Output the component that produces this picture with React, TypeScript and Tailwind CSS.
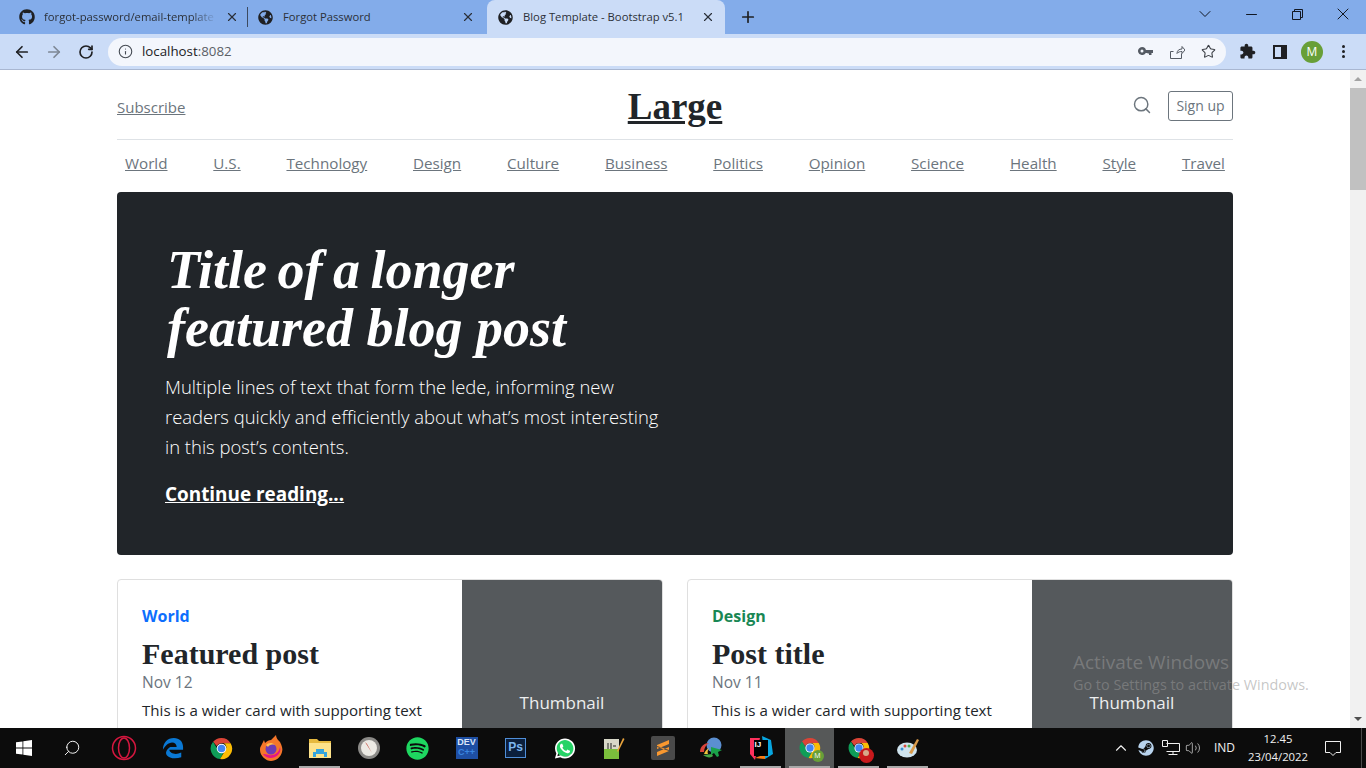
import { ArrowLeft, ArrowRight, RotateCw, Info, Star, Plus, X, ChevronDown, ChevronUp, Minus, Search, Volume2 } from "lucide-react";
import { FaGithub, FaGlobeAmericas, FaSpotify, FaWhatsapp, FaSteam } from "react-icons/fa";

const navLinks = ["World", "U.S.", "Technology", "Design", "Culture", "Business", "Politics", "Opinion", "Science", "Health", "Style", "Travel"];

function ChromeLogo({ size = 26 }: { size?: number }) {
  return (
    <svg width={size} height={size} viewBox="0 0 48 48">
      <path d="M24 2a22 22 0 0 1 19 11H24a11 11 0 0 0-10 6L6.500 10A22 22 0 0 1 24 2z" fill="#db4437" />
      <path d="M6.500 10 16 26a10 10 0 0 0 12 7l-7 13A22 22 0 0 1 6.500 10z" fill="#0f9d58" />
      <path d="M43 13a22 22 0 0 1-22 33l10-17a10 10 0 0 0-2-16z" fill="#fbbc05" />
      <circle cx="24" cy="24" r="10" fill="#fff" />
      <circle cx="24" cy="24" r="8" fill="#4285f4" />
    </svg>
  );
}

function BrowserTab({ title, icon, active, fade, className }: { title: string; icon: React.ReactNode; active?: boolean; fade?: boolean; className: string }) {
  return (
    <div className={`flex items-center h-full shrink-0 ${className} ${active ? "bg-[#cbdcf7] rounded-t-[8px]" : ""}`}>
      <span className="w-[25px] shrink-0 text-[#1f2023]">{icon}</span>
      <span className={`flex-1 overflow-hidden whitespace-nowrap text-[11.250px] text-[#2b3038] ${fade ? "[mask-image:linear-gradient(to_right,black_85%,transparent)]" : ""}`}>{title}</span>
      <X size={14} strokeWidth={2} className="ml-2 text-[#2a2f38] shrink-0" />
    </div>
  );
}

function TabStrip() {
  return (
    <div className="h-[34px] bg-[#83acea] flex items-center shrink-0">
      <div className="flex items-center h-full">
        <BrowserTab fade className="w-[247px] pl-[19px] pr-[8px]" title="forgot-password/email-template" icon={<FaGithub size={16} />} />
        <div className="w-px h-[20px] bg-[#3c4a60]" />
        <BrowserTab className="w-[239px] pl-[10px] pr-[12px]" title="Forgot Password" icon={<FaGlobeAmericas size={15} />} />
        <BrowserTab active className="w-[238px] pl-[11px] pr-[10px]" title="Blog Template - Bootstrap v5.1" icon={<FaGlobeAmericas size={15} />} />
      </div>
      <Plus size={18} strokeWidth={2.25} className="ml-[14px] text-[#1f2023]" />
      <div className="ml-auto flex items-center h-full pb-[6px] text-[#111722]">
        <ChevronDown size={20} strokeWidth={1.2} className="mr-[28px]" />
        <Minus size={17} strokeWidth={1.5} className="mr-[32px]" />
        <svg width="11" height="11" viewBox="0 0 11 11" fill="none" stroke="currentColor" className="mr-[30px]">
          <path d="M.500 2.500h8v8h-8zM2.500 2.500V.500h8v8h-2" />
        </svg>
        <X size={20} strokeWidth={1.2} className="mr-[13px]" />
      </div>
    </div>
  );
}

function Toolbar() {
  return (
    <div className="h-[36px] bg-[#cbdcf7] border-b border-[#a9b7d1] flex items-center shrink-0 text-[#1f2023]">
      <ArrowLeft size={18} strokeWidth={2.25} className="ml-[13px]" />
      <ArrowRight size={18} strokeWidth={2.25} className="ml-[14px] text-[#7d8794]" />
      <RotateCw size={16} strokeWidth={2.5} className="ml-[15px]" />
      <div className="ml-[14px] w-[1118px] h-[28px] bg-[#f3f6fc] rounded-full flex items-center pl-[10px] pr-[10px]">
        <Info size={15} strokeWidth={1.75} className="text-[#444a52]" />
        <span className="ml-[9px] text-[13.300px] leading-none text-[#5b5f66]">
          <span className="text-[#202124]">localhost</span>:8082
        </span>
        <div className="ml-auto flex items-center text-[#545a63]">
          <svg width="15" height="9" viewBox="0 0 15 9" fill="currentColor" className="mr-[16px]">
            <path d="M4 0a4 4 0 1 1-3.800 5.200A4 4 0 0 1 4 0zm0 2.500a1.500 1.500 0 1 0 0 3 1.500 1.500 0 0 0 0-3zM7.500 3H15v3h-1.500v2H11V6.500H9.500V6h-2z" />
          </svg>
          <svg width="16" height="16" viewBox="0 0 16 16" fill="none" stroke="currentColor" strokeWidth="1" className="mr-[16px]">
            <path d="M12.500 9.500v5h-11v-7h3M8 9.500c0-3 2-4.500 5-4.500V2.500l3 3.500-3 3.500V7.500c-2 0-4 .500-5 2z" />
          </svg>
          <Star size={15} strokeWidth={1.75} className="text-[#3c4046]" />
        </div>
      </div>
      <svg width="17" height="17" viewBox="0 0 24 24" fill="#1f2023" className="ml-[13px]">
        <path d="M20.500 11H19V7c0-1.100-.9-2-2-2h-4V3.500C13 2.120 11.880 1 10.500 1S8 2.120 8 3.500V5H4c-1.100 0-1.990.9-1.990 2v3.800H3.500c1.490 0 2.700 1.210 2.700 2.700s-1.210 2.700-2.700 2.700H2V20c0 1.100.9 2 2 2h3.800v-1.500c0-1.490 1.210-2.700 2.700-2.700 1.490 0 2.700 1.210 2.700 2.700V22H17c1.100 0 2-.9 2-2v-4h1.500c1.380 0 2.500-1.120 2.500-2.500S21.880 11 20.500 11z" />
      </svg>
      <svg width="14" height="14" viewBox="0 0 14 14" className="ml-[17px]">
        <path d="M0 0h14v14H0z" fill="#1f2023" />
        <path d="M2 2h6v10H2z" fill="#cbdcf7" />
      </svg>
      <div className="ml-[14px] w-[22px] h-[22px] rounded-full bg-[#689f38] text-white text-[12px] flex items-center justify-center">M</div>
      <div className="ml-[19px] flex flex-col gap-[2px]">
        <span className="w-[3px] h-[3px] rounded-full bg-[#1f2023]" />
        <span className="w-[3px] h-[3px] rounded-full bg-[#1f2023]" />
        <span className="w-[3px] h-[3px] rounded-full bg-[#1f2023]" />
      </div>
    </div>
  );
}

function PostCard({ tag, tagColor, title, date }: { tag: string; tagColor: string; title: string; date: string }) {
  return (
    <div className="flex h-[250px] border border-[#dfdfdf] rounded-[4px] overflow-hidden">
      <div className="flex-1 pl-6 pt-6">
        <div className={`text-[16px] leading-[24px] font-bold ${tagColor}`}>{tag}</div>
        <h3 className="mt-[9px] font-['Liberation_Serif',serif] font-bold text-[#212529] text-[30px] leading-[34px]">{title}</h3>
        <div className="-mt-[1px] text-[15.500px] leading-[24px] text-[#6c757d]">{date}</div>
        <p className="mt-[4px] text-[#212529] text-[15.100px] leading-[24px]">This is a wider card with supporting text</p>
      </div>
      <div className="w-[200px] bg-[#55595c] flex items-center justify-center pb-[2px] text-[#eceeef] text-[17px]">Thumbnail</div>
    </div>
  );
}

function BlogPage() {
  return (
    <div className="flex-1 overflow-hidden px-[117px]">
      <header className="h-[70px] border-b border-[#dee2e6] flex items-center justify-between">
        <a href="#" className="w-1/3 pt-[6px] text-[#6c757d] underline text-[15px]">Subscribe</a>
        <a href="#" className="w-1/3 pt-[4px] text-center font-['Liberation_Serif',serif] font-bold text-[37px] text-[#212529] underline">Large</a>
        <div className="w-1/3 flex items-center justify-end">
          <Search size={20} strokeWidth={1.75} className="text-[#6c757d] mr-[16px]" />
          <button className="mt-[2px] w-[65px] h-[30px] border border-[#6c757d] rounded-[3px] text-[14px] text-[#6c757d]">Sign up</button>
        </div>
      </header>
      <nav className="h-[52px] flex items-center justify-between px-2 pb-[6px]">
        {navLinks.map((link) => (
          <a key={link} href="#" className="text-[#6c757d] underline text-[15.200px]">{link}</a>
        ))}
      </nav>
      <section className="h-[363px] bg-[#212529] rounded-[4px] pl-[48px] pt-[49px] text-white">
        <h1 className="ml-[2px] font-['Liberation_Serif',serif] italic font-bold text-[54px] leading-[58px]">
          <span className="block [word-spacing:-3px]">Title of a longer</span>
          <span className="block">featured blog post</span>
        </h1>
        <p className="mt-[15px] text-[18.450px] leading-[30px] font-light">
          Multiple lines of text that form the lede, informing new<br />
          readers quickly and efficiently about what’s most interesting<br />
          in this post’s contents.
        </p>
        <a href="#" className="block mt-[17px] text-[18.900px] leading-[30px] font-bold underline">Continue reading...</a>
      </section>
      <div className="mt-[24px] grid grid-cols-2 gap-[24px]">
        <PostCard tag="World" tagColor="text-[#0d6efd]" title="Featured post" date="Nov 12" />
        <PostCard tag="Design" tagColor="text-[#198754]" title="Post title" date="Nov 11" />
      </div>
    </div>
  );
}

function Scrollbar() {
  return (
    <div className="w-[16px] bg-[#f1f1f1] flex flex-col items-center shrink-0">
      <div className="h-[18px] flex items-center justify-center">
        <div className="w-0 h-0 border-x-[4px] border-x-transparent border-b-[4px] border-b-[#a3a3a3]" />
      </div>
      <div className="w-full h-[102px] bg-[#c1c1c1]" />
      <div className="mt-auto h-[18px] flex items-center justify-center">
        <div className="w-0 h-0 border-x-[4px] border-x-transparent border-t-[4px] border-t-[#505050]" />
      </div>
    </div>
  );
}

function TaskIcon({ children, line, active }: { children: React.ReactNode; line?: boolean; active?: boolean }) {
  return (
    <div className={`relative w-[49px] h-full flex items-center justify-center shrink-0 ${active ? "bg-[#565858]" : ""}`}>
      {children}
      {line && <div className="absolute bottom-0 left-[4px] right-[4px] h-[2px] bg-[#a9a9a9]" />}
    </div>
  );
}

function Taskbar() {
  return (
    <div className="h-[40px] bg-[#0c0c0c] flex items-center shrink-0 text-white">
      <div className="w-[48px] h-full flex items-center justify-center">
        <svg width="16" height="16" viewBox="0 0 16 16" fill="#fff">
          <path d="M0 2.300 6.500 1.400V7.600H0zM7.300 1.300 16 0V7.600H7.300zM0 8.400H6.500V14.600L0 13.700zM7.300 8.400H16V16L7.300 14.700z" />
        </svg>
      </div>
      <div className="w-[48px] h-full flex items-center justify-center">
        <Search size={18} strokeWidth={1.25} className="-scale-x-100" />
      </div>
      <div className="w-[3px]" />
      <TaskIcon>
        <svg width="26" height="26" viewBox="0 0 26 26" fill="none" stroke="#d6173f" strokeWidth="1.500">
          <circle cx="13" cy="13" r="11.500" />
          <ellipse cx="13" cy="13" rx="5.500" ry="10" />
        </svg>
      </TaskIcon>
      <TaskIcon>
        <svg width="22" height="24" viewBox="0 0 24 24">
          <path d="M1 14C1 6 6 1 13 1c6 0 10 4 10 10v3H8c.500 4 7 6 13 3v5c-6 2-13 1.500-16-2.500C3 16 7 12 9 11h7c0-3-2-5-5-5-4 0-8 4-10 8z" fill="#0a78d4" />
        </svg>
      </TaskIcon>
      <TaskIcon><ChromeLogo size={23} /></TaskIcon>
      <TaskIcon>
        <svg width="24" height="26" viewBox="0 0 24 26">
          <path d="M2 11 5 5l1 3c2-2 4-3 6-3l5-5c0 3 2 5 4 7 2 4 3 7 2 10-1 5-6 9-11 9S1 21 1 15c0-1 0-3 1-4z" fill="#f5762a" />
          <path d="M4 19c2 4 10 6 15 1 2-2 3-5 2-8-1 6-6 9-11 8-3-1-5-1-6-1z" fill="#e31587" />
          <circle cx="12" cy="14" r="5.500" fill="#6e3bb5" />
          <path d="M7 10c2-2 6-3 9 0-3-1-6 0-7 2z" fill="#ffbd4f" />
        </svg>
      </TaskIcon>
      <TaskIcon line>
        <svg width="22" height="20" viewBox="0 0 22 20">
          <path d="M0 1h8l2 2h12v4H0z" fill="#e6b93f" />
          <path d="M0 5h22v15H0z" fill="#fde28a" />
          <path d="M4 19v-5h3v-3h8v3h3v5h-3v-3H7v3z" fill="#35a4dc" />
        </svg>
      </TaskIcon>
      <TaskIcon>
        <svg width="22" height="22" viewBox="0 0 22 22">
          <circle cx="11" cy="11" r="11" fill="#8b8a87" />
          <circle cx="11" cy="11" r="8" fill="#eceae4" />
          <path d="M7 5l7 11-5-9z" fill="#c0392b" />
        </svg>
      </TaskIcon>
      <TaskIcon><FaSpotify size={23} className="text-[#1ed760]" /></TaskIcon>
      <TaskIcon>
        <div className="w-[22px] h-[22px] bg-[#1e4fa3] text-[#dbe6f7] font-['Liberation_Sans',sans-serif] font-bold text-[9px] leading-[10px] text-center">DEV<br /><span className="text-[#3b87e0]">C++</span></div>
      </TaskIcon>
      <TaskIcon>
        <div className="w-[21px] h-[20px] bg-[#0b1f3c] border border-[#4f8ed8] text-[#7bb6f0] font-['Liberation_Sans',sans-serif] text-[12px] font-bold leading-[17px] text-center">Ps</div>
      </TaskIcon>
      <TaskIcon>
        <div className="relative w-[22px] h-[22px] flex items-center justify-center">
          <div className="absolute inset-[2px] rounded-full bg-[#25d366]" />
          <FaWhatsapp size={23} className="relative text-white" />
        </div>
      </TaskIcon>
      <TaskIcon>
        <svg width="22" height="24" viewBox="0 0 22 24">
          <path d="M1 3h15v20H1z" fill="#d8d8c8" />
          <path d="M1 13h15v10H1z" fill="#7bbf3c" />
          <path d="M5 7v6M8 7v6M10 10h3" stroke="#222" fill="none" />
          <path d="M14 15 20 2l1.500 1L15 16z" fill="#e8a33c" />
        </svg>
      </TaskIcon>
      <TaskIcon>
        <div className="w-[24px] h-[24px] rounded-[2px] bg-[#4a4a4a] flex items-center justify-center">
          <svg width="12" height="16" viewBox="0 0 12 16" fill="#f9982f">
            <path d="M0 5 12 0v4L0 9zM0 7l12 4v-1L0 6zM12 7v4L0 16v-4z" />
          </svg>
        </div>
      </TaskIcon>
      <TaskIcon>
        <svg width="26" height="22" viewBox="0 0 26 22">
          <circle cx="15" cy="8" r="7.500" fill="#5b8fd1" />
          <path d="M1 15c0-6 5-9 9-9-3 2-5 5-5 9z" fill="#d8443a" />
          <path d="M5 17c1-3 3-5 5-6-1 2-2 4-1 6z" fill="#f0c33c" />
          <path d="M4 18c4 3 8 3 10 1l-1-2z" fill="#46a546" />
          <path d="M12 10l11 3-4 2 1 4-2 1-3-4-3 2z" fill="#1aa34a" />
        </svg>
      </TaskIcon>
      <TaskIcon line>
        <div className="relative w-[24px] h-[24px] flex items-center justify-center">
          <svg width="24" height="24" viewBox="0 0 24 24" className="absolute inset-0">
            <path d="M1 2h10L6 24 1 18z" fill="#fe315d" />
            <path d="M13 0l9 4 2 14-8 5z" fill="#07a6e0" />
            <path d="M6 22l10-4v5z" fill="#f97a12" />
          </svg>
          <div className="relative w-[14px] h-[16px] bg-black text-white text-[8px] leading-[9px] font-bold pl-[1px] font-['Liberation_Sans',sans-serif]">IJ</div>
        </div>
      </TaskIcon>
      <TaskIcon active line>
        <div className="relative">
          <ChromeLogo size={22} />
          <div className="absolute -right-[3px] -bottom-[3px] w-[12px] h-[12px] rounded-full bg-[#689f38] text-white text-[7px] leading-[12px] text-center">M</div>
        </div>
      </TaskIcon>
      <TaskIcon line>
        <div className="relative">
          <ChromeLogo size={22} />
          <div className="absolute -right-[4px] -bottom-[4px] w-[15px] h-[15px] rounded-full bg-[#c8191c]">
            <div className="mx-auto mt-[2px] w-[6px] h-[6px] rounded-full bg-[#d7a98a]" />
          </div>
        </div>
      </TaskIcon>
      <TaskIcon line>
        <svg width="24" height="24" viewBox="0 0 24 24">
          <ellipse cx="11" cy="14" rx="10" ry="7.500" fill="#cfe3ee" />
          <circle cx="6" cy="13" r="1.500" fill="#3a8fd0" />
          <circle cx="9" cy="10" r="1.500" fill="#d94b3d" />
          <circle cx="13" cy="10" r="1.500" fill="#4caf50" />
          <path d="M13 17 21 3l2 1-7 14z" fill="#d99a4a" />
        </svg>
      </TaskIcon>
      <div className="ml-auto flex items-center h-full text-[#f0f0f0]">
        <ChevronUp size={18} strokeWidth={1.5} />
        <FaSteam size={16} className="ml-[8px] text-[#b9d4ee]" />
        <svg width="18" height="16" viewBox="0 0 18 16" fill="none" stroke="#f0f0f0" className="ml-[8px]">
          <path d="M4.500 3.500h13v8h-13M11 11.500v3M6.500 14.500h9M.500.500h5v6h-5z" />
        </svg>
        <Volume2 size={16} strokeWidth={1} className="ml-[5px]" />
        <span className="ml-[13px] text-[12px]">IND</span>
        <div className="ml-[8px] w-[70px] text-center text-[11.300px] leading-[18px]">
          <div>12.45</div>
          <div>23/04/2022</div>
        </div>
        <svg width="16" height="15" viewBox="0 0 16 15" fill="none" stroke="#f0f0f0" className="ml-[12px] mr-[20px]">
          <path d="M.500.500h15v11h-4.500l-3 3-3-3H.500z" />
        </svg>
        <div className="w-px h-full bg-[#4a4a4a] mr-[4px]" />
      </div>
    </div>
  );
}

export default function App() {
  return (
    <div className="relative h-screen flex flex-col overflow-hidden bg-white font-['Open_Sans',sans-serif]">
      <TabStrip />
      <Toolbar />
      <div className="flex-1 flex min-h-0">
        <BlogPage />
        <Scrollbar />
      </div>
      <Taskbar />
      {/* watermark */}
      <div className="absolute right-[56px] bottom-[73px] w-[237px] text-[#969696]/55 pointer-events-none">
        <div className="text-[19px] leading-[26px]">Activate Windows</div>
        <div className="text-[14.400px] leading-[20px] whitespace-nowrap">Go to Settings to activate Windows.</div>
      </div>
    </div>
  );
}
